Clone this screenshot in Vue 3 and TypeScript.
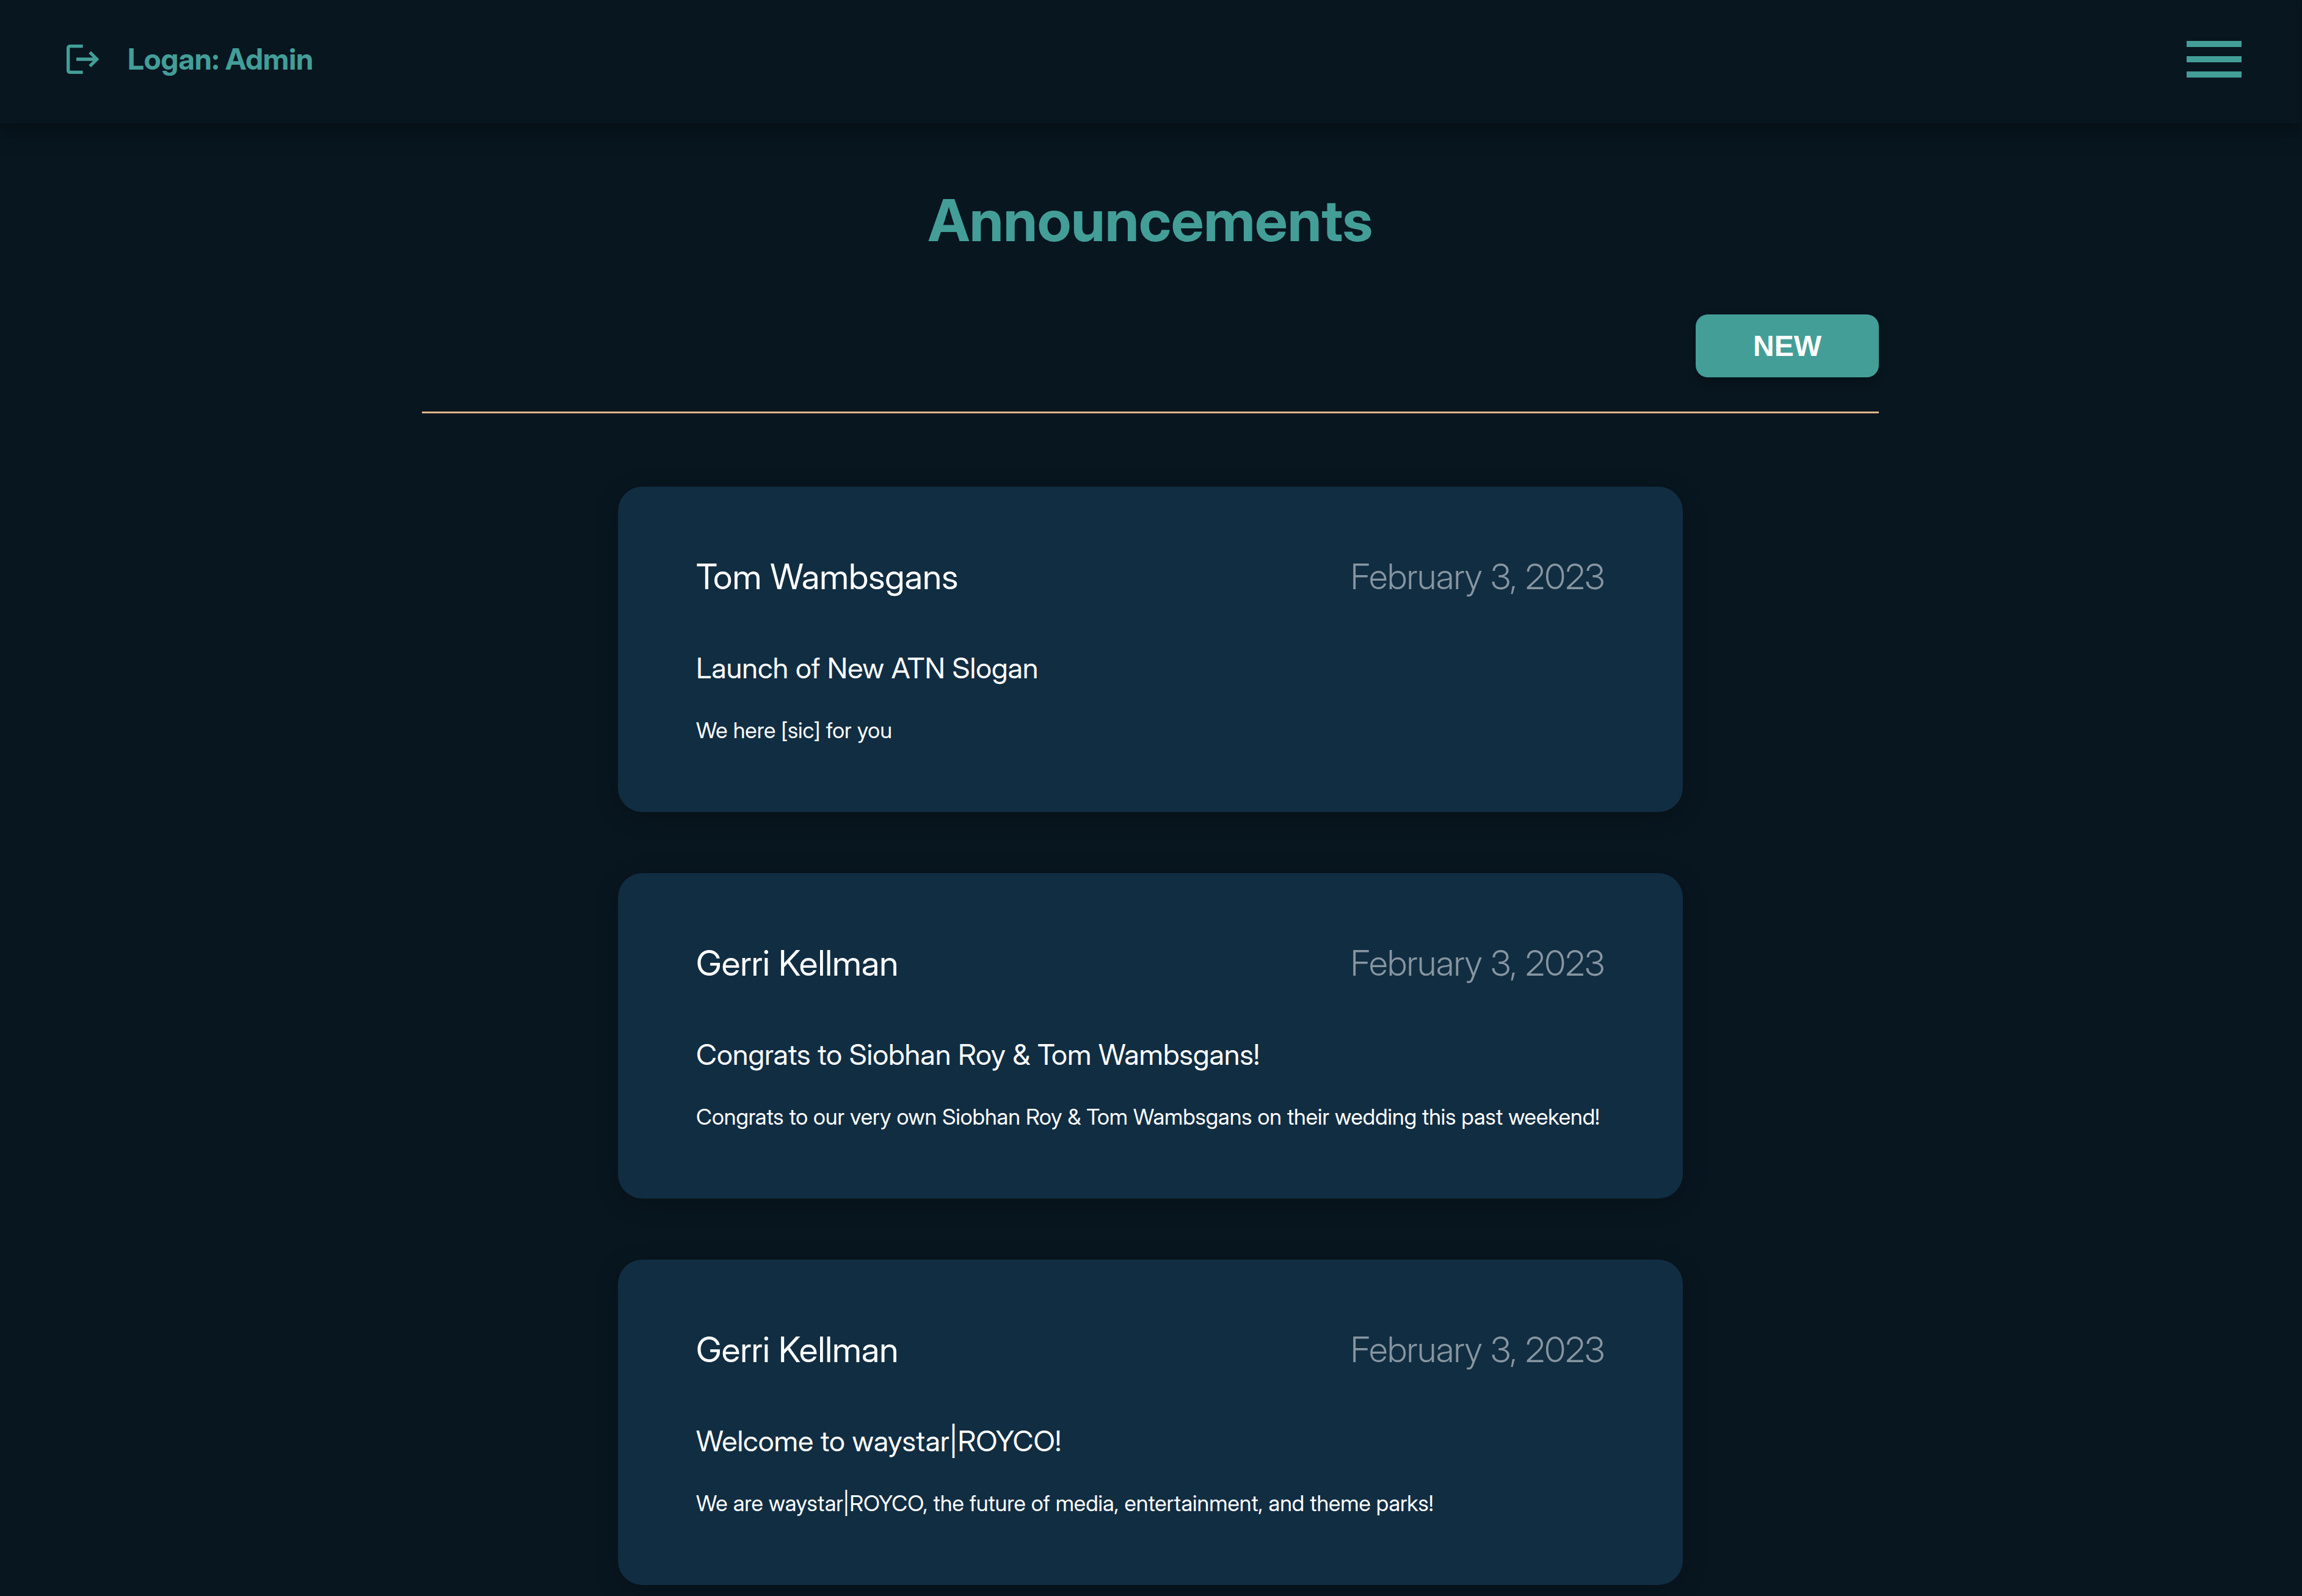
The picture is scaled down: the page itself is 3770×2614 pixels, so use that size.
<script setup lang="ts">
interface Announcement {
  id: number
  author: string
  date: string
  title: string
  message: string
}

const userName = 'Logan: Admin'

const announcements: Announcement[] = [
  {
    id: 1,
    author: 'Tom Wambsgans',
    date: 'February 3, 2023',
    title: 'Launch of New ATN Slogan',
    message: 'We here [sic] for you',
  },
  {
    id: 2,
    author: 'Gerri Kellman',
    date: 'February 3, 2023',
    title: 'Congrats to Siobhan Roy & Tom Wambsgans!',
    message:
      'Congrats to our very own Siobhan Roy & Tom Wambsgans on their wedding this past weekend!',
  },
  {
    id: 3,
    author: 'Gerri Kellman',
    date: 'February 3, 2023',
    title: 'Welcome to waystar|ROYCO!',
    message: 'We are waystar|ROYCO, the future of media, entertainment, and theme parks!',
  },
]
</script>

<template>
  <div class="page">
    <header class="navbar">
      <div class="user">
        <button class="icon-button" type="button" aria-label="Log out">
          <svg class="logout-icon" viewBox="0 0 24 24" aria-hidden="true">
            <path d="M13 3H5a2 2 0 0 0-2 2v14a2 2 0 0 0 2 2h8v-2H5V5h8z" />
            <path d="M18 7l5 5-5 5-1.4-1.4 2.6-2.6H9v-2h10.2l-2.6-2.6z" />
          </svg>
        </button>
        <span class="user-name">{{ userName }}</span>
      </div>
      <button class="icon-button menu-button" type="button" aria-label="Open menu">
        <span class="bar"></span>
        <span class="bar"></span>
        <span class="bar"></span>
      </button>
    </header>

    <main class="content">
      <h1 class="heading">Announcements</h1>
      <div class="toolbar">
        <button class="new-button" type="button">NEW</button>
      </div>
      <section class="feed" aria-label="Announcements">
        <article v-for="item in announcements" :key="item.id" class="card">
          <div class="card-top">
            <h2 class="author">{{ item.author }}</h2>
            <time class="date" datetime="2023-02-03">{{ item.date }}</time>
          </div>
          <h3 class="title">{{ item.title }}</h3>
          <p class="message">{{ item.message }}</p>
        </article>
      </section>
    </main>
  </div>
</template>

<style>
body {
  background: #08161f;
}
</style>

<style scoped>
.page {
  box-sizing: border-box;
  min-height: 100vh;
  padding: 0 2px 18px 0;
  background: #08161f;
  color: #ffffff;
  font-family: 'Inter Display', Inter, 'Liberation Sans', sans-serif;
}

.navbar {
  position: relative;
  display: flex;
  align-items: center;
  justify-content: space-between;
  padding: 65px 97px 73px 101px;
  background: #08161f;
  box-shadow: 0 8px 16px rgba(0, 0, 0, 0.2), 0 12px 40px rgba(0, 0, 0, 0.2);
}

.user {
  display: flex;
  align-items: center;
  gap: 44px;
  color: #439e98;
}

.icon-button {
  display: block;
  padding: 0;
  border: 0;
  background: none;
  color: #439e98;
  cursor: pointer;
}

.logout-icon {
  display: block;
  width: 64px;
  height: 64px;
  fill: currentColor;
}

.user-name {
  font-size: 48px;
  font-weight: 700;
  line-height: 58px;
}

.menu-button {
  display: flex;
  flex-direction: column;
  gap: 15px;
  width: 90px;
}

.bar {
  width: 100%;
  height: 10px;
  background: currentColor;
}

.content {
  box-sizing: border-box;
  width: 100%;
  max-width: 2386px;
  margin: 0 auto;
  padding-top: 101px;
}

.heading {
  margin: 0 0 97px;
  color: #439e98;
  font-size: 95px;
  font-weight: 700;
  line-height: 115px;
  text-align: center;
}

.toolbar {
  display: flex;
  justify-content: flex-end;
  padding-bottom: 56px;
  border-bottom: 3px solid #dfb68b;
}

.new-button {
  width: 300px;
  padding: 24px 0;
  border: 0;
  border-radius: 20px;
  background: #439e98;
  box-shadow: 0 8px 16px rgba(0, 0, 0, 0.2);
  color: #ffffff;
  font-family: 'Liberation Sans', Arial, sans-serif;
  font-size: 48px;
  font-weight: 700;
  line-height: 55px;
  cursor: pointer;
}

.feed {
  display: flex;
  flex-direction: column;
  align-items: center;
  gap: 100px;
  padding-top: 120px;
}

.card {
  box-sizing: border-box;
  width: 100%;
  max-width: 1744px;
  padding: 113px 128px 112px;
  border-radius: 40px;
  background: #112d42;
  box-shadow: 0 8px 40px rgba(0, 0, 0, 0.2);
}

.card-top {
  display: flex;
  justify-content: space-between;
  margin-bottom: 86px;
}

.author,
.date {
  margin: 0;
  font-size: 57px;
  font-weight: 400;
  line-height: 69px;
}

.date {
  color: rgba(255, 255, 255, 0.5);
  font-weight: 300;
}

.title {
  margin: 0 0 53px;
  font-size: 47px;
  font-weight: 400;
  line-height: 57px;
}

.message {
  margin: 0;
  font-size: 36px;
  line-height: 43px;
}
</style>
